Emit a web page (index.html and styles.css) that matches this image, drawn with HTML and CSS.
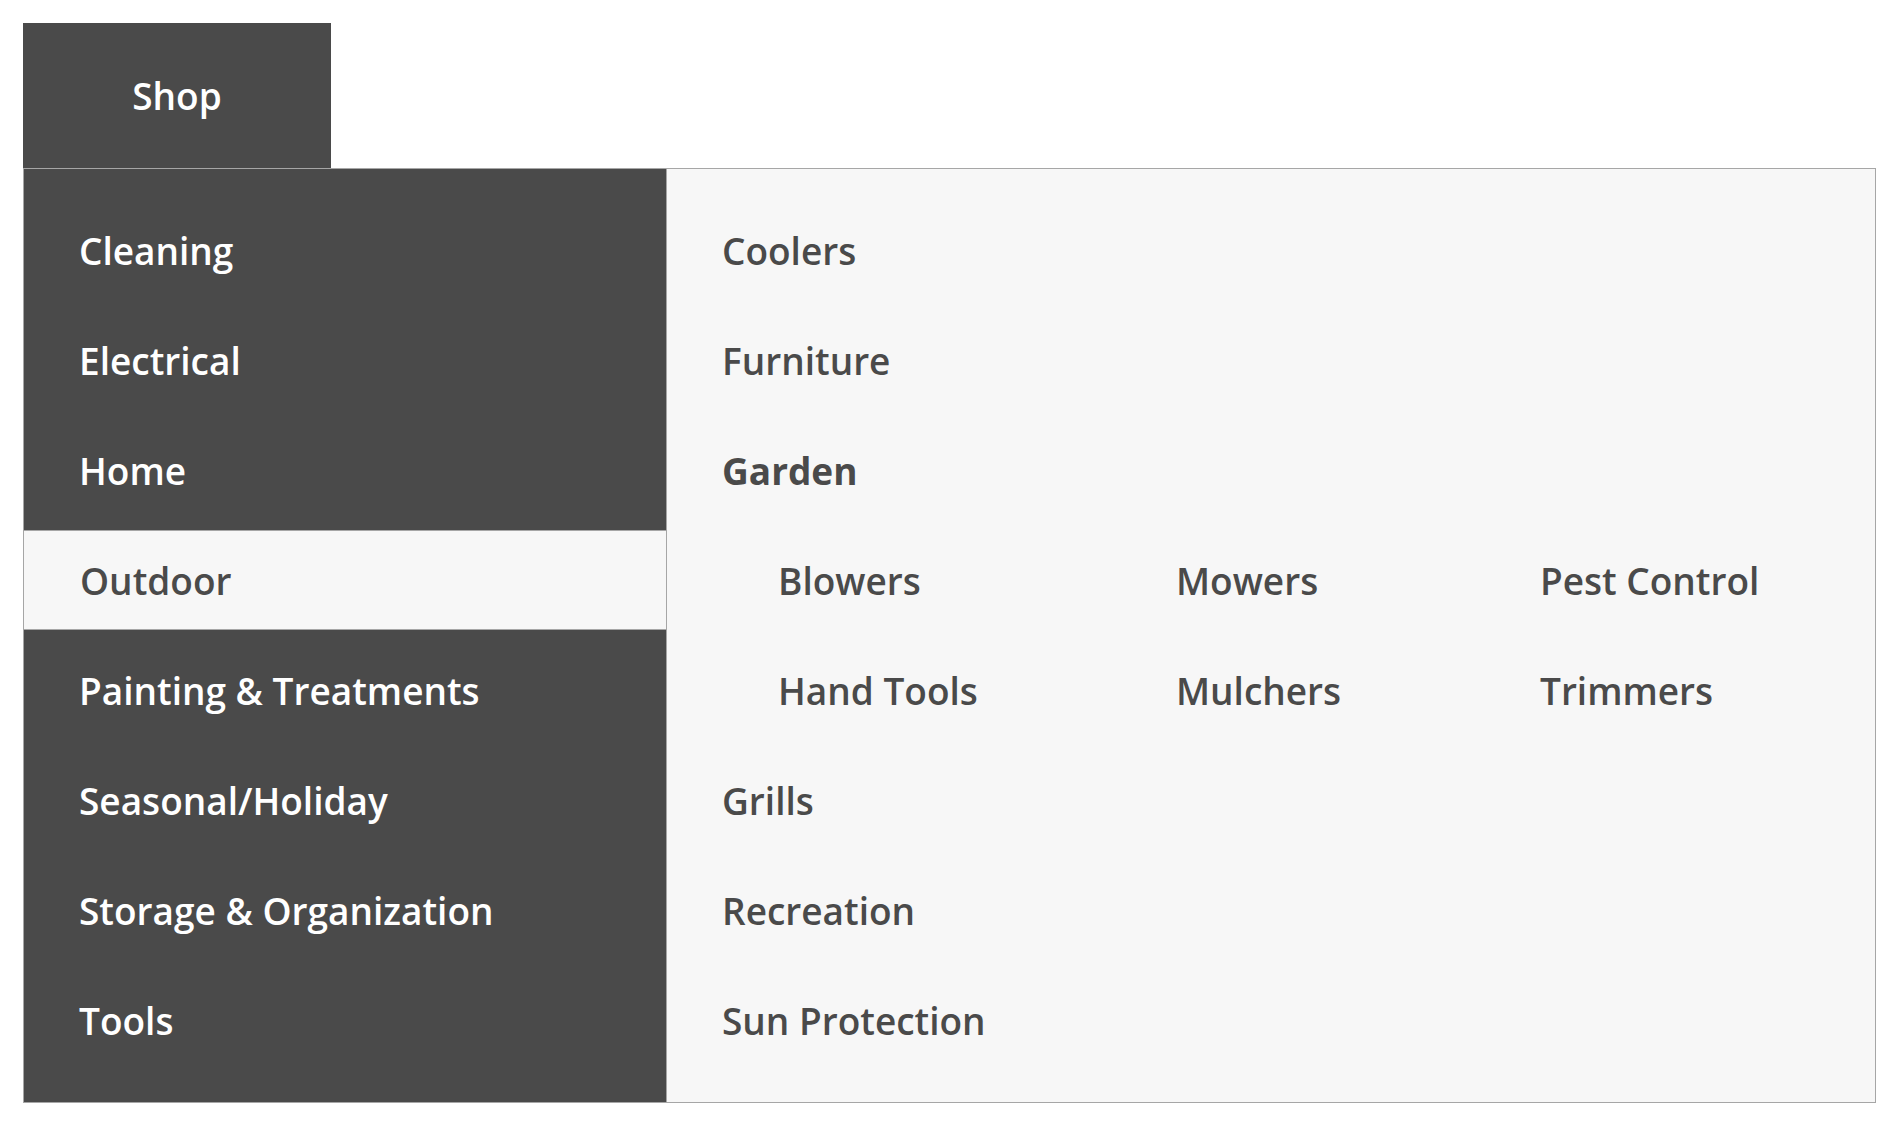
FILE: index.html
```html
<!DOCTYPE html>
<html lang="en">
<head>
<meta charset="utf-8">
<title>Shop menu</title>
<link rel="stylesheet" href="styles.css">
</head>
<body>
<div class="menu">
  <div class="tab">Shop</div>
  <div class="panel">
    <ul class="cats">
      <li class="cat">Cleaning</li>
      <li class="cat">Electrical</li>
      <li class="cat">Home</li>
      <li class="cat active">Outdoor</li>
      <li class="cat">Painting &amp; Treatments</li>
      <li class="cat">Seasonal/Holiday</li>
      <li class="cat">Storage &amp; Organization</li>
      <li class="cat">Tools</li>
    </ul>
    <div class="subs">
      <div class="sub">Coolers</div>
      <div class="sub">Furniture</div>
      <div class="sub current">Garden</div>
      <div class="subgrid">
        <div class="sub">Blowers</div>
        <div class="sub">Mowers</div>
        <div class="sub">Pest Control</div>
        <div class="sub">Hand Tools</div>
        <div class="sub">Mulchers</div>
        <div class="sub">Trimmers</div>
      </div>
      <div class="sub">Grills</div>
      <div class="sub">Recreation</div>
      <div class="sub">Sun Protection</div>
    </div>
  </div>
</div>
</body>
</html>
```
FILE: styles.css
```css
html, body {
  margin: 0;
  padding: 0;
  background: #ffffff;
}
body {
  font-family: "Open Sans", Lato, sans-serif;
  color: #4a4a4a;
}
.menu {
  padding: 23px 21px 22px 23px;
}
.tab {
  width: 308px;
  height: 145px;
  background: #4a4a4a;
  color: #ffffff;
  font-size: 37px;
  font-weight: 600;
  display: flex;
  align-items: center;
  justify-content: center;
}
.panel {
  display: grid;
  grid-template-columns: 643px 1fr;
  height: 933px;
  border: 1px solid #a6a6a6;
  background: #f7f7f7;
}
.cats {
  list-style: none;
  margin: 0;
  padding: 31px 0 0 0;
  background: #4a4a4a;
  border-right: 1px solid #a6a6a6;
  display: flex;
  flex-direction: column;
  gap: 10px;
}
.cat {
  height: 100px;
  flex: none;
  padding-left: 55px;
  display: flex;
  align-items: center;
  color: #ffffff;
  font-size: 37px;
  font-weight: 600;
}
.cat.active {
  background: #f7f7f7;
  color: #4a4a4a;
  box-sizing: border-box;
  border-top: 1px solid #a6a6a6;
  border-bottom: 1px solid #a6a6a6;
  margin-left: -1px;
  padding-left: 56px;
  border-left: 1px solid #a6a6a6;
  font-weight: 600;
}
.subs {
  padding: 26px 0 0 55px;
}
.sub {
  height: 110px;
  display: flex;
  align-items: center;
  font-size: 37px;
  font-weight: 600;
  color: #4a4a4a;
}
.sub.current {
  font-weight: 700;
}
.subgrid {
  display: grid;
  grid-template-columns: 398px 364px auto;
  margin-left: 56px;
}
```
